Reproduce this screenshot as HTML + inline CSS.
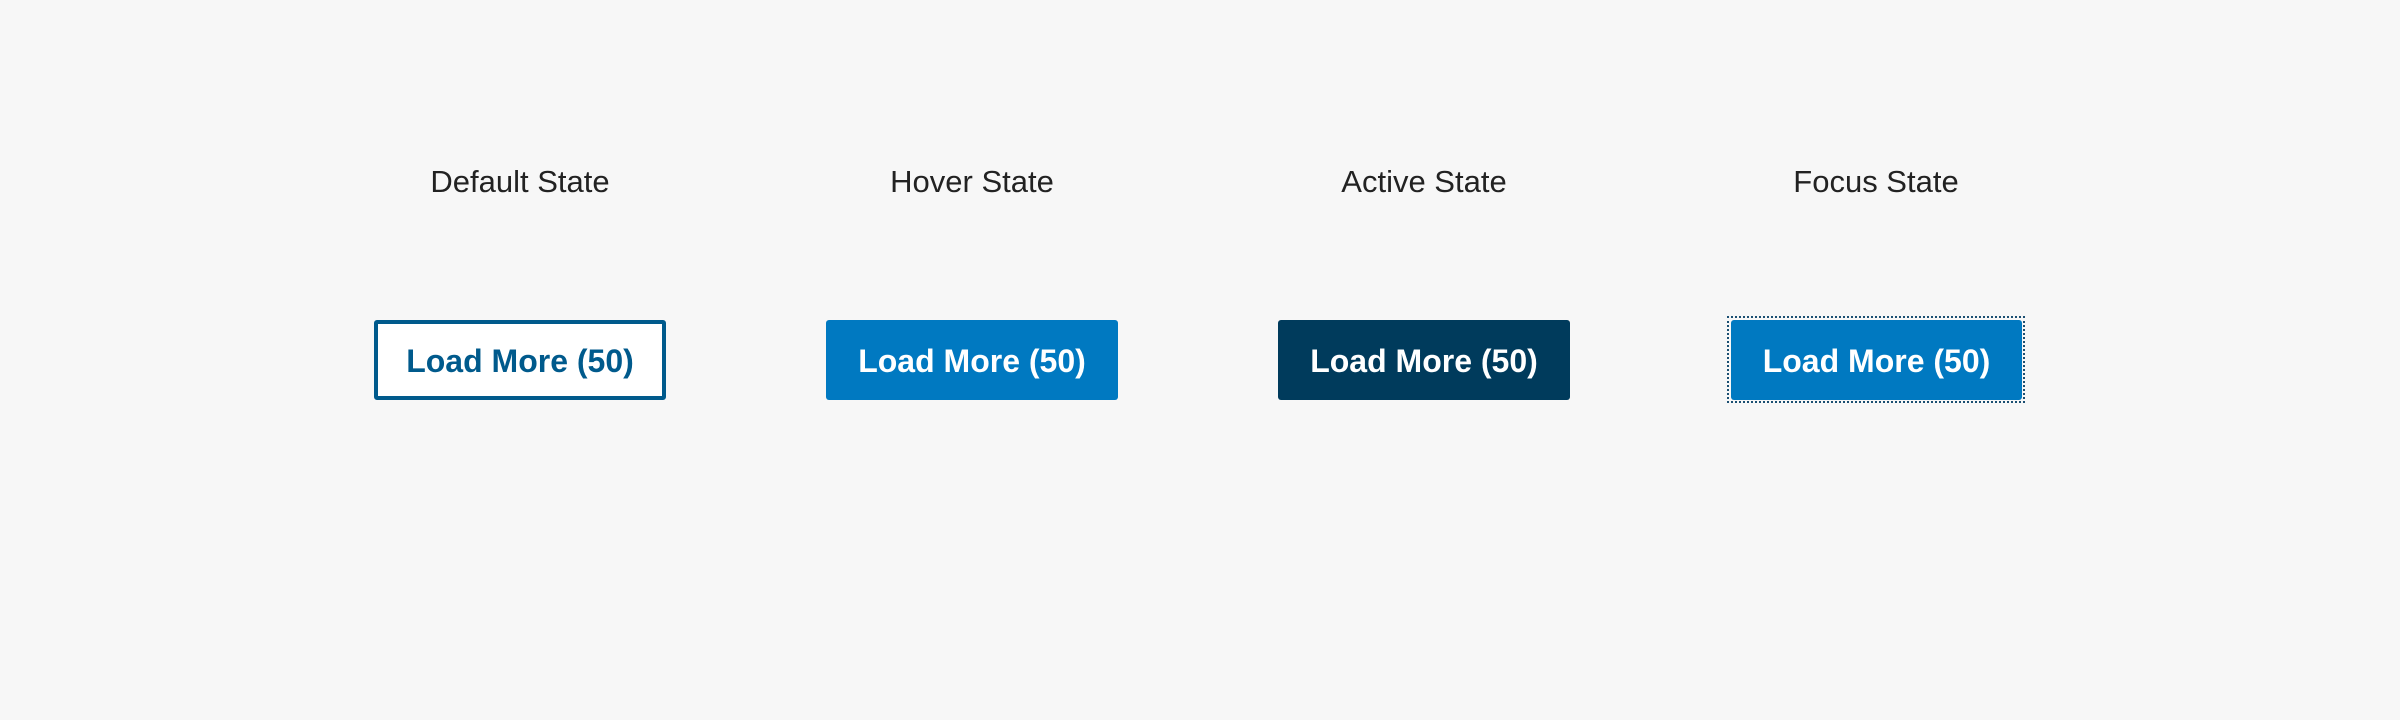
<!DOCTYPE html>
<html><head><style>
html,body{margin:0;padding:0;background:#f7f7f7;width:2400px;height:720px;overflow:hidden;font-family:"Liberation Sans",Arial,sans-serif}
.lbl{position:absolute;top:162px;width:400px;text-align:center;font-size:31px;color:#222;line-height:40px}
.btn{position:absolute;top:320px;width:292px;height:80px;box-sizing:border-box;border-radius:3px;display:flex;align-items:center;justify-content:center;font-weight:bold;font-size:32px;color:#fff;padding-top:3px}
</style></head><body>
<div class="lbl" style="left:320px">Default State</div>
<div class="lbl" style="left:772px">Hover State</div>
<div class="lbl" style="left:1224px">Active State</div>
<div class="lbl" style="left:1676px">Focus State</div>
<div class="btn" style="left:374px;border:4px solid #005a8c;color:#005a8c;background:#fff">Load More (50)</div>
<div class="btn" style="left:826px;background:#0079c1">Load More (50)</div>
<div class="btn" style="left:1278px;background:#003b5c">Load More (50)</div>
<div style="position:absolute;left:1727px;top:316px;width:298px;height:87px;box-sizing:border-box;border:2px dotted #1b4f72"></div>
<div class="btn" style="left:1731px;width:291px;background:#0079c1">Load More (50)</div>
</body></html>
